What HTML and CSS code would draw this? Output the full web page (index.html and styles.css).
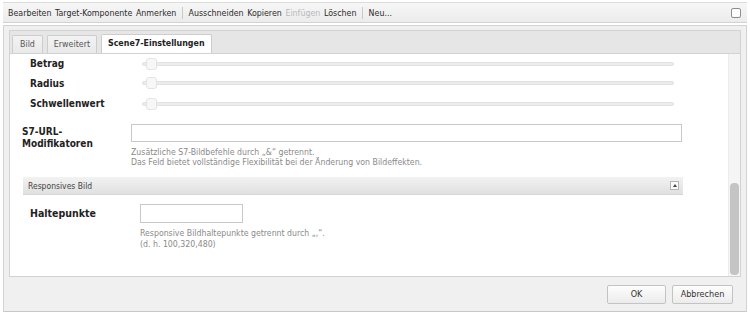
FILE: index.html
```html
<!DOCTYPE html>
<html lang="de">
<head>
    <meta charset="UTF-8">
    <title>Scene7-Einstellungen</title>
    <link rel="stylesheet" href="styles.css">
</head>
<body>
    <div class="toolbar">
        <div class="menu">
            <span>Bearbeiten</span>
            <span>Target-Komponente</span>
            <span>Anmerken</span>
            <i class="sep"></i>
            <span>Ausschneiden</span>
            <span>Kopieren</span>
            <span class="disabled">Einfügen</span>
            <span>Löschen</span>
            <i class="sep"></i>
            <span>Neu...</span>
        </div>
        <span class="check"></span>
    </div>

    <div class="dialog">
        <div class="tabs">
            <div class="tab">Bild</div>
            <div class="tab">Erweitert</div>
            <div class="tab active">Scene7-Einstellungen</div>
        </div>

        <div class="panel">
            <div class="content">
                <div class="slider-row">
                    <label>Betrag</label>
                    <div class="slider"><span class="knob"></span></div>
                </div>
                <div class="slider-row">
                    <label>Radius</label>
                    <div class="slider"><span class="knob"></span></div>
                </div>
                <div class="slider-row">
                    <label>Schwellenwert</label>
                    <div class="slider"><span class="knob"></span></div>
                </div>

                <div class="field url-field">
                    <label>S7-URL-<br>Modifikatoren</label>
                    <div class="field-body">
                        <input type="text" class="wide-input">
                        <p class="hint">Zusätzliche S7-Bildbefehle durch „&amp;“ getrennt.<br>Das Feld bietet vollständige Flexibilität bei der Änderung von Bildeffekten.</p>
                    </div>
                </div>

                <div class="section-head">
                    <span>Responsives Bild</span>
                    <span class="collapse"></span>
                </div>

                <div class="field break-field">
                    <label>Haltepunkte</label>
                    <div class="field-body">
                        <input type="text" class="short-input">
                        <p class="hint">Responsive Bildhaltepunkte getrennt durch „,“.<br>(d. h. 100,320,480)</p>
                    </div>
                </div>
            </div>
            <div class="scrollbar"><div class="thumb"></div></div>
        </div>

        <div class="footer">
            <button class="btn ok">OK</button>
            <button class="btn">Abbrechen</button>
        </div>
    </div>
</body>
</html>
```

FILE: styles.css
```css
* {
    margin: 0;
    padding: 0;
    box-sizing: border-box;
}

body {
    font-family: 'DejaVu Sans Condensed', 'DejaVu Sans', sans-serif;
    font-size: 8.8px;
    color: #333;
    background: #fff;
    width: 750px;
    height: 314px;
    overflow: hidden;
}

/* Toolbar */
.toolbar {
    height: 21px;
    margin: 2px 3px 0;
    padding: 0 6px 0 5px;
    display: flex;
    align-items: center;
    justify-content: space-between;
    background: linear-gradient(#f6f6f6, #ececec);
    border-top: 1px solid #dcdcdc;
    border-bottom: 1px solid #d2d2d2;
}

.menu {
    display: flex;
    align-items: center;
    gap: 3.6px;
    color: #2b2b2b;
}

.menu .disabled {
    color: #b9b9b9;
}

.sep {
    width: 1px;
    height: 12px;
    background: #c9c9c9;
    margin: 0 2px;
}

.check {
    width: 10px;
    height: 10px;
    border: 1px solid #8c8c8c;
    border-radius: 2px;
    background: #fff;
}

/* Dialog */
.dialog {
    margin: 2px 3px 0;
    height: 287px;
    padding: 4px 5px 0;
    background: #f0f0f0;
    border: 1px solid #d3d3d3;
    border-bottom-color: #c8c8c8;
    display: flex;
    flex-direction: column;
}

.tabs {
    height: 23px;
    flex: none;
    display: flex;
    align-items: flex-end;
    gap: 4px;
    padding: 0 0 0 2px;
    background: #e6e6e6;
    border: 1px solid #d2d2d2;
    border-bottom: none;
}

.tab {
    height: 18px;
    padding: 0 6px;
    line-height: 17px;
    color: #555;
    background: linear-gradient(#f3f3f3, #e9e9e9);
    border: 1px solid #cdcdcd;
    border-bottom: none;
    border-radius: 2px 2px 0 0;
}

.tab:first-child {
    padding: 0 7px;
}

.tab.active {
    height: 19px;
    background: #fff;
    color: #222;
    font-weight: bold;
}

.panel {
    height: 224px;
    flex: none;
    display: flex;
    background: #fff;
    border: 1px solid #d2d2d2;
}

.content {
    flex: 1;
    overflow: hidden;
    padding: 0 0 0 12px;
}

.slider-row {
    height: 20.5px;
    display: flex;
    align-items: center;
}

.slider-row:first-child {
    height: 19px;
}

.slider-row label {
    width: 120px;
    padding-left: 8px;
    font-weight: bold;
    font-size: 10px;
    color: #222;
}

.slider {
    position: relative;
    width: 532px;
    height: 4px;
    background: #ececec;
    border: 1px solid #e2e2e2;
    border-radius: 2px;
}

.knob {
    position: absolute;
    left: 3px;
    top: -5px;
    width: 11px;
    height: 12px;
    border: 1px solid #e4e4e4;
    border-radius: 3px;
    background: #f7f7f7;
}

.field {
    display: flex;
}

.field label {
    font-weight: bold;
    font-size: 10px;
    color: #222;
}

.url-field {
    margin-top: 10px;
}

.url-field label {
    width: 109px;
    padding-top: 2px;
    line-height: 12px;
}

.wide-input {
    display: block;
    width: 551px;
    height: 18px;
    border: 1px solid #c9c9c9;
    background: #fff;
}

.hint {
    margin-top: 5px;
    color: #8a8a8a;
    font-size: 8.7px;
    line-height: 10px;
}

.section-head {
    margin: 10px 0 0 1px;
    width: 660px;
    height: 18px;
    padding: 0 4px 0 5px;
    display: flex;
    align-items: center;
    justify-content: space-between;
    background: linear-gradient(#f2f2f2, #e0e0e0);
    border-bottom: 1px solid #d6d6d6;
    color: #444;
    font-size: 8.5px;
}

.collapse {
    width: 9px;
    height: 9px;
    border: 1px solid #b5b5b5;
    background: #fafafa;
    position: relative;
}

.collapse::after {
    content: "";
    position: absolute;
    left: 2px;
    top: 2px;
    border-left: 2px solid transparent;
    border-right: 2px solid transparent;
    border-bottom: 3px solid #444;
}

.break-field {
    margin-top: 9px;
}

.break-field label {
    width: 118px;
    padding: 3px 0 0 8px;
    font-size: 10.5px;
}

.short-input {
    display: block;
    width: 103px;
    height: 19px;
    border: 1px solid #c9c9c9;
    background: #fff;
}

.break-field .hint {
    margin-top: 5px;
    line-height: 11px;
}

.scrollbar {
    width: 12px;
    padding: 0 1px 1px;
    background: #f5f5f5;
    border-left: 1px solid #ececec;
    display: flex;
    flex-direction: column;
    justify-content: flex-end;
}

.thumb {
    height: 92px;
    border-radius: 4px;
    background: #c4c4c4;
}

/* Footer */
.footer {
    flex: 1;
    display: flex;
    justify-content: flex-end;
    align-items: center;
    gap: 6px;
    padding-right: 8px;
}

.btn {
    height: 19px;
    font-family: inherit;
    font-size: 9px;
    color: #333;
    background: linear-gradient(#fdfdfd, #ececec);
    border: 1px solid #c3c3c3;
    border-radius: 2px;
}

.btn.ok {
    width: 59px;
}

.btn:not(.ok) {
    width: 61px;
}
```
